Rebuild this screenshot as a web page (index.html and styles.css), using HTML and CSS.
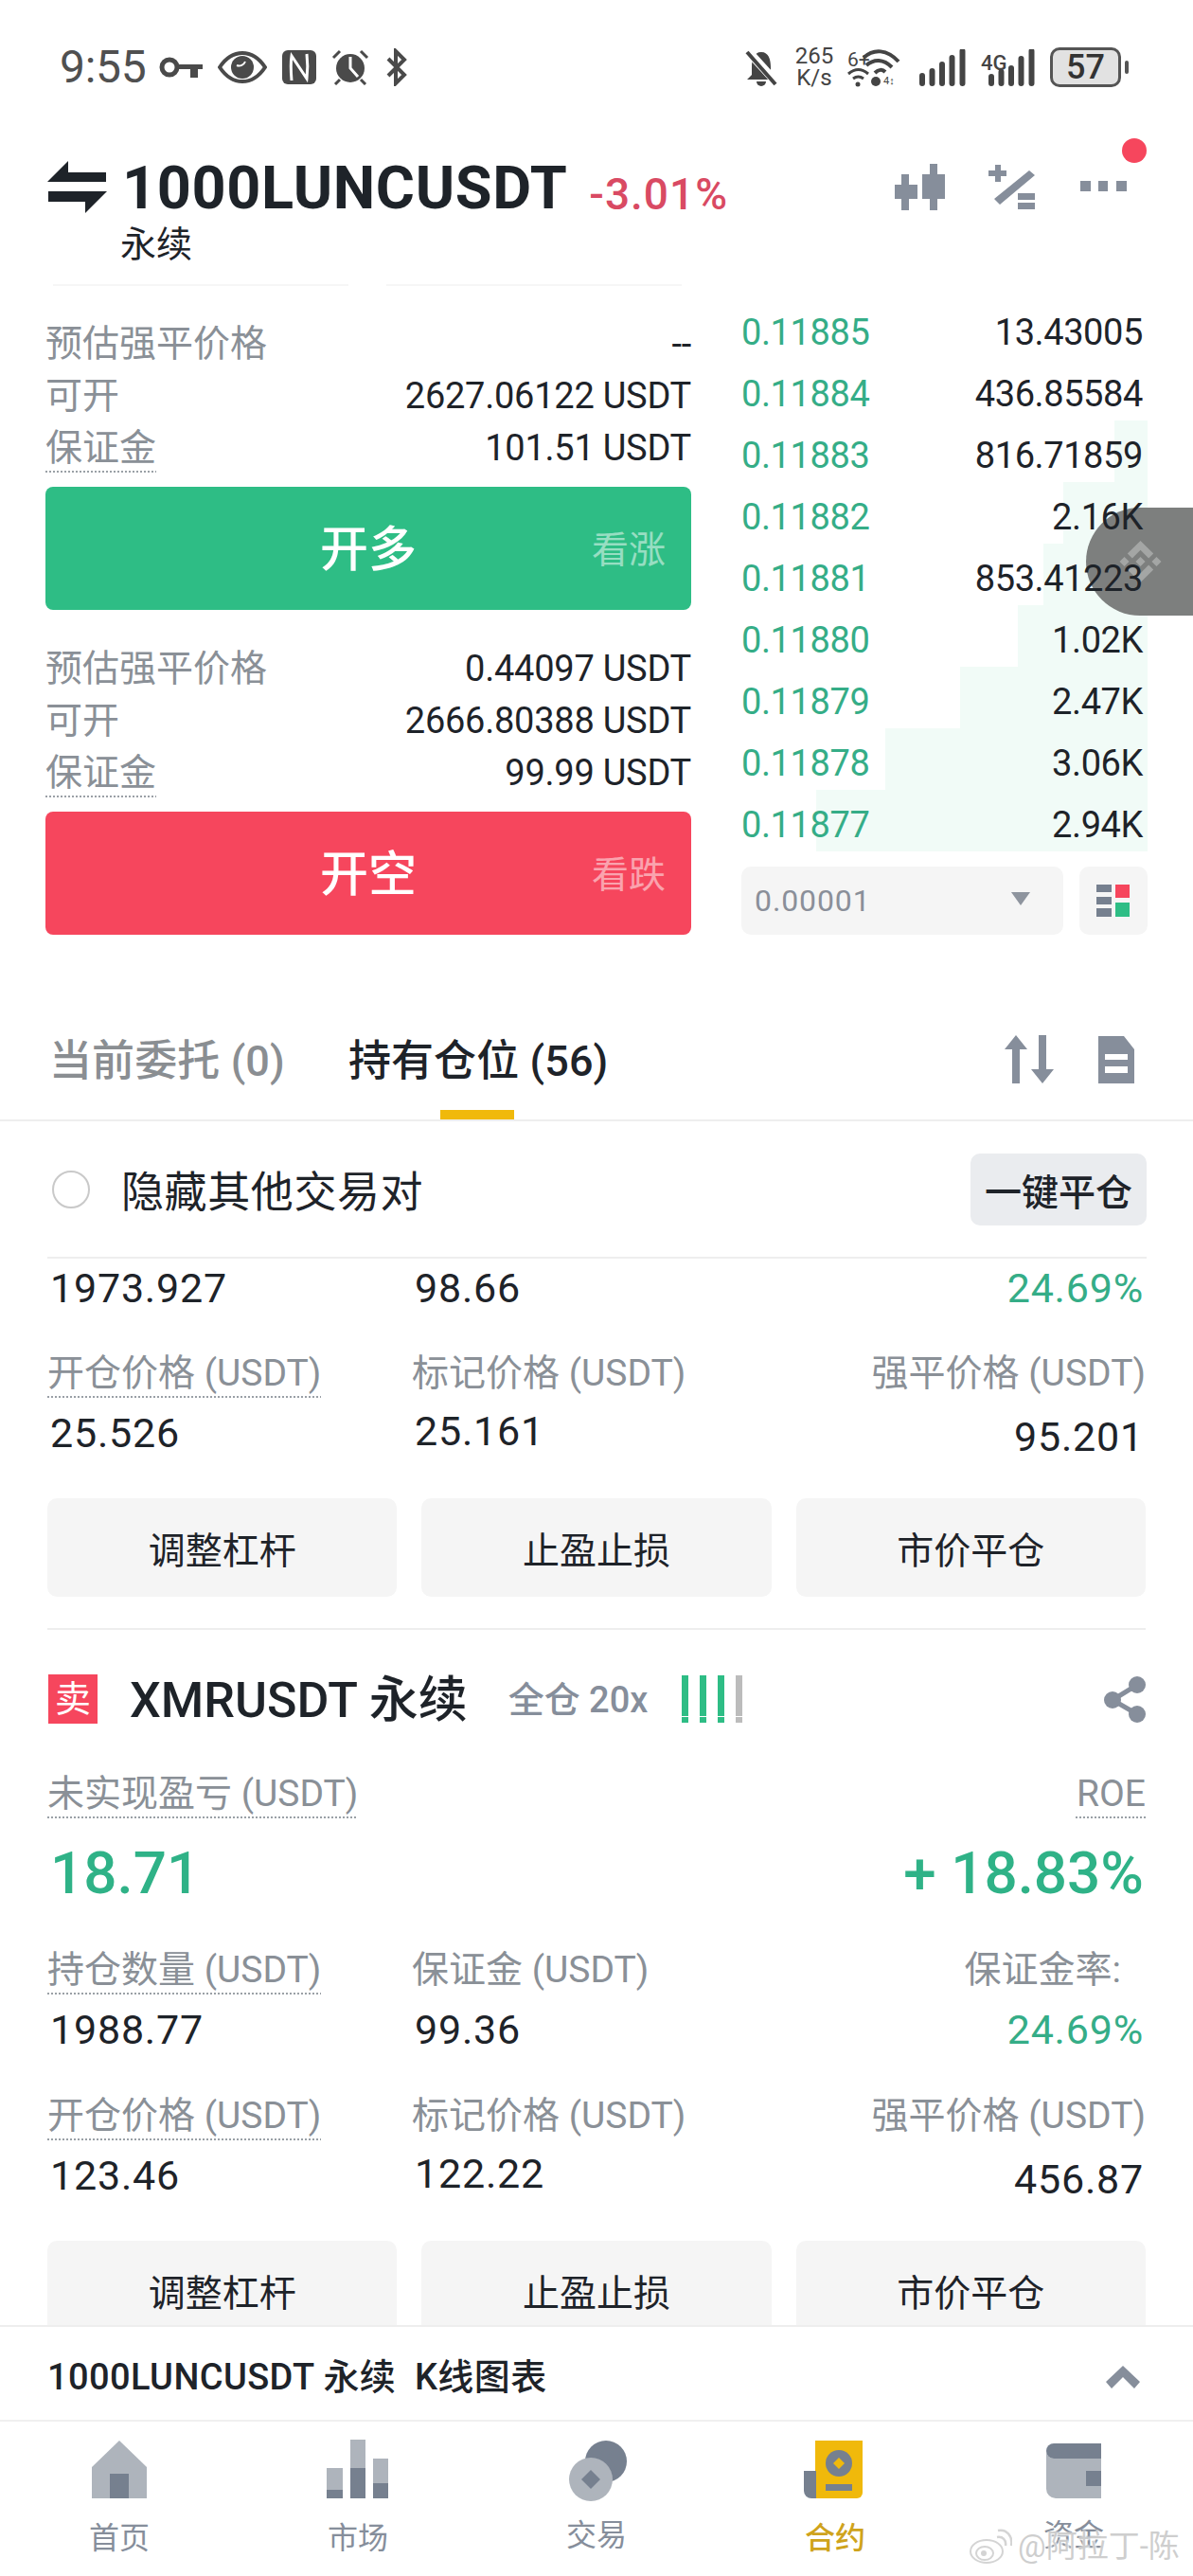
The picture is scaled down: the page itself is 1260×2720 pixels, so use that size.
FILE: index.html
```html
<!DOCTYPE html>
<html lang="zh-CN">
<head>
<meta charset="utf-8">
<title>1000LUNCUSDT 永续</title>
<link rel="stylesheet" href="styles.css">
</head>
<body>
<div class="page">
  <div class="status">
    <div class="status-left">
      <span class="time">9:55</span>
      <svg class="ic-key" viewBox="0 0 46 24"><circle cx="11" cy="12" r="8" fill="none" stroke="#4a4a4a" stroke-width="5"/><path d="M19 9H46V14H41V23H33V14H19Z" fill="#4a4a4a"/></svg>
      <svg class="ic-eye" viewBox="0 0 52 34"><path d="M2 17C10 5 19 2 26 2S42 5 50 17C42 29 33 32 26 32S10 29 2 17Z" fill="none" stroke="#4a4a4a" stroke-width="4"/><circle cx="26" cy="17" r="12" fill="#4a4a4a"/><path d="M20 15A7 7 0 0 0 29 11" fill="none" stroke="#fff" stroke-width="2"/></svg>
      <svg class="ic-nfc" viewBox="0 0 36 36"><rect width="36" height="36" rx="6" fill="#4a4a4a"/><path d="M10 32C9 20 9 12 10 6L26 30C27 22 27 12 26 4" fill="none" stroke="#fff" stroke-width="3"/></svg>
      <svg class="ic-alarm" viewBox="0 0 40 38"><circle cx="20" cy="20" r="15" fill="#4a4a4a"/><path d="M20 8V20L28 29" fill="none" stroke="#fff" stroke-width="3"/><path d="M2 9L9 2M38 9L31 2M9 32L4 37M31 32L36 37" stroke="#4a4a4a" stroke-width="3" fill="none"/></svg>
      <svg class="ic-bt" viewBox="0 0 24 40"><path d="M3 29L20 12L11 3V37L20 28L3 11" fill="none" stroke="#4a4a4a" stroke-width="4"/></svg>
    </div>
    <div class="status-right">
      <svg class="ic-bell" viewBox="0 0 34 39"><path d="M17 3C9 3 7 11 7 19V27L2 32H32L27 27V19C27 11 25 3 17 3Z" fill="#444"/><path d="M12 34A5 5 0 0 0 22 34Z" fill="#444"/><path d="M3 2L33 35" stroke="#fff" stroke-width="9"/><path d="M2 3L32 37" stroke="#444" stroke-width="4"/></svg>
      <span class="speed"><span>265</span><span>K/s</span></span>
      <svg class="ic-wifi" viewBox="0 0 56 42"><text x="0" y="20" class="wifi-six">6+</text><path d="M17 11C28 1 42 2 54 15M20 19C28 12 38 12 47 21M29 27C33 23 37 23 40 26" fill="none" stroke="#444" stroke-width="4"/><circle cx="30" cy="36" r="5" fill="#444"/><path d="M1 28C8 22 15 22 22 28M6 33C10 30 13 30 17 33" fill="none" stroke="#444" stroke-width="3"/><circle cx="11" cy="39" r="2.500" fill="#444"/><text x="38" y="39" class="wifi-four">4↕</text></svg>
      <svg class="ic-sig" viewBox="0 0 49 39"><path d="M3 36V28M13.500 36V23M24 36V16M34.500 36V9M45.500 36V2" stroke="#444" stroke-width="6" stroke-linecap="round" fill="none"/></svg>
      <svg class="ic-sig4" viewBox="0 0 58 39"><text x="0" y="22" class="sig-four">4G</text><path d="M11 36V29M21.500 36V24M32 36V20M42.500 36V10M53.500 36V2" stroke="#444" stroke-width="6" stroke-linecap="round" fill="none"/></svg>
      <span class="battery"><span class="battery-body">57</span><i class="battery-tip"></i></span>
    </div>
  </div>

  <header class="head">
    <div class="head-top">
      <svg class="ic-swap" viewBox="0 0 63 56"><path d="M0 23L22 1V13H62V23ZM1 33H63L40 56V44H1Z" fill="#1e2329"/></svg>
      <h1 class="symbol">1000LUNCUSDT</h1>
      <span class="pct">-3.01%</span>
      <div class="head-tools">
        <svg class="ic-candle" viewBox="0 0 53 49"><path d="M7 11H15V22H24V37H15V49H7V37H0V22H7ZM37 0H45V11H53V37H45V49H37V37H29V11H37Z" fill="#868e9b"/></svg>
        <svg class="ic-calc" viewBox="0 0 49 49"><path d="M7 1H13V7H19V13H13V19H7V13H0V7H7ZM43 7L49 12L12 43L6 37Z M31 31H49V38H31ZM31 41H49V48H31Z" fill="#868e9b"/></svg>
        <svg class="ic-more" viewBox="0 0 49 12"><path d="M0 0H11V11H0ZM19 0H29V11H19ZM38 0H49V11H38Z" fill="#868e9b"/></svg>
        <i class="red-dot"></i>
      </div>
    </div>
    <div class="perp">永续</div>
  </header>

  <div class="rule-pair"><i></i><i></i></div>

  <section class="trade">
    <div class="order">
      <div class="order-block">
        <div class="kv"><span class="k">预估强平价格</span><span class="v">--</span></div>
        <div class="kv"><span class="k">可开</span><span class="v">2627.06122 USDT</span></div>
        <div class="kv"><span class="k dot">保证金</span><span class="v">101.51 USDT</span></div>
        <button class="act act-long"><span class="act-main">开多</span><span class="act-sub">看涨</span></button>
      </div>
      <div class="order-block second">
        <div class="kv"><span class="k">预估强平价格</span><span class="v">0.44097 USDT</span></div>
        <div class="kv"><span class="k">可开</span><span class="v">2666.80388 USDT</span></div>
        <div class="kv"><span class="k dot">保证金</span><span class="v">99.99 USDT</span></div>
        <button class="act act-short"><span class="act-main">开空</span><span class="act-sub">看跌</span></button>
      </div>
    </div>
    <div class="book">
      <div class="float">
        <svg viewBox="0 0 126 126"><path d="M38.200 53L63 28.200L87.800 53L102.200 38.600L63 0L23.800 38.600ZM38.200 73L63 97.800L87.800 73L102.200 87.400L63 126L23.800 87.400ZM0 63L14.400 48.600L28.800 63L14.400 77.400ZM97.200 63L111.600 48.600L126 63L111.600 77.400ZM63 48.400L77.600 63L63 77.600L48.400 63Z" fill="#a4a6a5"/></svg>
      </div>
      <div class="br"><span class="p">0.11885</span><span class="q">13.43005</span></div>
      <div class="br"><span class="p">0.11884</span><span class="q">436.85584</span></div>
      <div class="br"><i class="depth" style="width:35px"></i><span class="p">0.11883</span><span class="q">816.71859</span></div>
      <div class="br"><i class="depth" style="width:89px"></i><span class="p">0.11882</span><span class="q">2.16K</span></div>
      <div class="br"><i class="depth" style="width:110px"></i><span class="p">0.11881</span><span class="q">853.41223</span></div>
      <div class="br"><i class="depth" style="width:137px"></i><span class="p">0.11880</span><span class="q">1.02K</span></div>
      <div class="br"><i class="depth" style="width:198px"></i><span class="p">0.11879</span><span class="q">2.47K</span></div>
      <div class="br"><i class="depth" style="width:277px"></i><span class="p">0.11878</span><span class="q">3.06K</span></div>
      <div class="br"><i class="depth" style="width:350px"></i><span class="p">0.11877</span><span class="q">2.94K</span></div>
      <div class="book-foot">
        <div class="tick"><span>0.00001</span><i class="tick-caret"></i></div>
        <div class="layout-btn">
          <svg viewBox="0 0 36 35"><path d="M0 0H16V8H0ZM0 13H16V21H0ZM0 25H16V34H0Z" fill="#76808f"/><rect x="20" width="15" height="14" fill="#f6465d"/><rect x="20" y="19" width="15" height="15" fill="#2ebd85"/></svg>
        </div>
      </div>
    </div>
  </section>

  <nav class="tabs">
    <span class="tab">当前委托 (0)</span>
    <span class="tab on">持有仓位 (56)<i class="tab-bar"></i></span>
    <div class="tab-tools">
      <svg class="ic-sort" viewBox="0 0 52 51"><path d="M12 0L24 15H16V51H8V15H0ZM36 0H44V36H52L40 51L28 36H36Z" fill="#868e9b"/></svg>
      <svg class="ic-doc" viewBox="0 0 38 50"><path fill-rule="evenodd" d="M0 0H27L38 14V50H0ZM7 19V25H31V19ZM7 32V39H31V32Z" fill="#868e9b"/></svg>
    </div>
  </nav>

  <div class="filter">
    <span class="filter-left"><i class="radio"></i><span>隐藏其他交易对</span></span>
    <button class="close-all">一键平仓</button>
  </div>

  <main class="positions">
    <section class="card">
      <div class="grid3 top-cut">
        <div class="cell"><span class="val">1973.927</span></div>
        <div class="cell"><span class="val">98.66</span></div>
        <div class="cell end"><span class="val green">24.69%</span></div>
      </div>
      <div class="grid3 row-gap">
        <div class="cell"><span class="lab dot">开仓价格 (USDT)</span><span class="val">25.526</span></div>
        <div class="cell"><span class="lab">标记价格 (USDT)</span><span class="val up2">25.161</span></div>
        <div class="cell end"><span class="lab">强平价格 (USDT)</span><span class="val down4">95.201</span></div>
      </div>
      <div class="btns">
        <button class="btn">调整杠杆</button><button class="btn">止盈止损</button><button class="btn">市价平仓</button>
      </div>
    </section>
    <section class="card last">
      <div class="pos-head">
        <span class="side">卖</span>
        <span class="pos-name">XMRUSDT 永续</span>
        <span class="pos-mode">全仓 20x</span>
        <span class="risk"><i class="g"></i><i class="g"></i><i class="g"></i><i class="n"></i></span>
        <svg class="ic-share" viewBox="0 0 44 49"><path d="M35 9L9 25L35 40" fill="none" stroke="#868e9b" stroke-width="5"/><circle cx="35" cy="9" r="9" fill="#868e9b"/><circle cx="9" cy="25" r="9" fill="#868e9b"/><circle cx="35" cy="40" r="9" fill="#868e9b"/></svg>
      </div>
      <div class="pnl-labels"><span class="lab dot">未实现盈亏 (USDT)</span><span class="lab dot">ROE</span></div>
      <div class="pnl-vals"><span>18.71</span><span>+ 18.83%</span></div>
      <div class="grid3 row-gap first">
        <div class="cell"><span class="lab dot">持仓数量 (USDT)</span><span class="val">1988.77</span></div>
        <div class="cell"><span class="lab">保证金 (USDT)</span><span class="val">99.36</span></div>
        <div class="cell end"><span class="lab inset">保证金率:</span><span class="val green">24.69%</span></div>
      </div>
      <div class="grid3 row-gap tight">
        <div class="cell"><span class="lab dot">开仓价格 (USDT)</span><span class="val">123.46</span></div>
        <div class="cell"><span class="lab">标记价格 (USDT)</span><span class="val up2">122.22</span></div>
        <div class="cell end"><span class="lab">强平价格 (USDT)</span><span class="val down4">456.87</span></div>
      </div>
      <div class="btns">
        <button class="btn">调整杠杆</button><button class="btn">止盈止损</button><button class="btn">市价平仓</button>
      </div>
    </section>
  </main>

  <div class="kline">
    <span>1000LUNCUSDT 永续&nbsp; K线图表</span>
    <svg class="ic-up" viewBox="0 0 36 24"><path d="M18 0L36 17L30 24L18 12L6 24L0 17Z" fill="#868e9b"/></svg>
  </div>

  <footer class="nav">
    <div class="nav-item">
      <svg viewBox="0 0 80 70"><path d="M40 3L69 31V64H11V31Z" fill="#aeb4bc"/><rect x="30" y="38" width="20" height="26" fill="#76808f"/></svg>
      <span>首页</span>
    </div>
    <div class="nav-item">
      <svg viewBox="0 0 80 70"><path d="M7 32H24V64H7ZM32 2H48V64H32ZM56 22H72V64H56Z" fill="#aeb4bc"/><path d="M7 55H24V64H7ZM32 32H48V64H32ZM56 48H72V64H56Z" fill="#76808f"/></svg>
      <span>市场</span>
    </div>
    <div class="nav-item raise">
      <svg viewBox="0 0 80 70"><circle cx="50" cy="25" r="22" fill="#76808f"/><circle cx="34" cy="44" r="23" fill="#aeb4bc"/><path d="M34 34L44 44L34 54L24 44Z" fill="#76808f"/></svg>
      <span>交易</span>
    </div>
    <div class="nav-item active">
      <svg viewBox="0 0 80 70"><path d="M19 3H69V58A6 6 0 0 1 63 64H19Z" fill="#f0b90b"/><path d="M7 35H20V64H15A8 8 0 0 1 7 56Z" fill="#76808f"/><circle cx="44" cy="27" r="14" fill="#76808f"/><path d="M44 21L50 27L44 33L38 27Z" fill="#f0b90b"/><rect x="30" y="49" width="28" height="7" fill="#76808f"/></svg>
      <span>合约</span>
    </div>
    <div class="nav-item raise2">
      <svg viewBox="0 0 80 70"><path d="M11 14V54A10 10 0 0 0 21 64H69V22H19A8 8 0 0 1 11 14Z" fill="#aeb4bc"/><path d="M19 6H69V22H19A8 8 0 0 1 19 6Z" fill="#76808f"/><rect x="53" y="35" width="16" height="16" fill="#76808f"/></svg>
      <span>资金</span>
    </div>
    <div class="watermark">
      <svg viewBox="0 0 46 38"><ellipse cx="19" cy="24" rx="17" ry="12" fill="#fff" stroke="#d4d4d4" stroke-width="2"/><ellipse cx="17" cy="26" rx="9" ry="7" fill="none" stroke="#d4d4d4" stroke-width="2"/><circle cx="16" cy="26" r="3" fill="#d4d4d4"/><path d="M30 9C36 8 40 12 39 18M31 2C40 0 47 8 45 18" fill="none" stroke="#d4d4d4" stroke-width="2.500"/></svg>
      <span>@阿拉丁-陈</span>
    </div>
  </footer>
</div>
</body>
</html>
```

FILE: styles.css
```css
* { box-sizing: border-box; }
html, body { margin: 0; padding: 0; background: #fff; }
body { font-family: Roboto, "Noto Sans CJK SC", sans-serif; color: #1e2329; }
i { display: block; font-style: normal; }
button { font: inherit; color: inherit; border: 0; padding: 0; }
svg { display: block; flex: none; }

.page { width: 1260px; height: 2720px; display: flex; flex-direction: column; overflow: hidden; background: #fff; }

/* status bar */
.status { height: 110px; padding: 50px 68px 0 63px; display: flex; justify-content: space-between; align-items: flex-start; color: #4a4a4a; }
.status-left, .status-right { display: flex; align-items: center; height: 42px; }
.time { font-size: 48px; line-height: 42px; letter-spacing: -0.3px; width: 105px; color: #505050; }
.ic-key { width: 46px; height: 24px; margin-right: 16px; }
.ic-eye { width: 52px; height: 34px; margin-right: 16px; }
.ic-nfc { width: 36px; height: 36px; margin-right: 16px; }
.ic-alarm { width: 40px; height: 38px; margin-right: 17px; }
.ic-bt { width: 24px; height: 40px; }
.ic-bell { width: 34px; height: 39px; margin-right: 17px; }
.speed { display: flex; flex-direction: column; align-items: center; width: 44px; margin-right: 13px; font-size: 24px; line-height: 23px; color: #444; }
.ic-wifi { width: 56px; height: 42px; margin-right: 20px; }
.wifi-six { font: 21px Roboto, sans-serif; fill: #444; }
.wifi-four { font: 11px Roboto, sans-serif; fill: #444; }
.sig-four { font: 500 22px Roboto, sans-serif; fill: #444; }
.ic-sig { width: 49px; height: 39px; margin-right: 16px; }
.ic-sig4 { width: 58px; height: 39px; margin-right: 15px; }
.battery { display: flex; align-items: center; }
.battery-body { width: 75px; height: 42px; border: 3px solid #555; border-radius: 10px; background: #e2e2e2; font-size: 36px; font-weight: 500; line-height: 36px; text-align: center; color: #333; }
.battery-tip { width: 4px; height: 14px; margin-left: 4px; border-radius: 2px; background: #555; }

/* header */
.head { height: 190px; padding: 56px 70px 0 50px; }
.head-top { display: flex; align-items: center; height: 62px; }
.ic-swap { width: 63px; height: 56px; }
.symbol { margin: 3px 0 0 16px; font-size: 63px; font-weight: 700; line-height: 62px; letter-spacing: 0.6px; }
.pct { margin: 15px 0 0 23px; font-size: 46px; font-weight: 500; line-height: 50px; letter-spacing: 1px; color: #d94a63; }
.head-tools { position: relative; margin-left: auto; display: flex; align-items: center; height: 62px; }
.ic-candle { width: 53px; height: 49px; margin-right: 46px; }
.ic-calc { width: 49px; height: 49px; margin-right: 48px; }
.ic-more { width: 49px; height: 12px; }
.red-dot { position: absolute; top: -20px; right: -21px; width: 26px; height: 26px; border-radius: 50%; background: #f6465d; }
.perp { margin: 8px 0 0 77px; font-size: 38px; line-height: 44px; }

.rule-pair { display: flex; gap: 40px; height: 2px; padding-left: 56px; }
.rule-pair i { width: 312px; background: #f6f6f6; }

/* trade */
.trade { height: 768px; padding-left: 48px; display: flex; }
.order { width: 682px; padding-top: 34px; }
.kv { display: flex; justify-content: space-between; height: 55px; line-height: 55px; }
.k { font-size: 39px; color: #8a9097; }
.v { font-size: 38px; letter-spacing: -0.25px; }
.dot { text-decoration: underline dotted #9aa0a6 2px; text-underline-offset: 11px; text-decoration-skip-ink: none; }
.act { display: grid; grid-template-columns: 1fr auto 1fr; align-items: center; width: 100%; height: 130px; margin-top: 13px; border-radius: 8px; color: #fff; }
.act-main { grid-column: 2; padding-top: 4px; font-size: 51px; font-weight: 500; line-height: 60px; }
.act-sub { grid-column: 3; justify-self: end; padding: 3px 27px 0 0; font-size: 39px; line-height: 46px; opacity: 0.5; }
.act-long { background: #2ebd85; }
.act-short { background: #f6465d; }
.second { margin-top: 35px; }

.book { position: relative; width: 429px; margin-left: 53px; padding-top: 17px; }
.br { position: relative; display: flex; justify-content: space-between; height: 65px; line-height: 65px; padding-right: 5px; font-size: 38px; letter-spacing: -0.4px; }
.p, .q { position: relative; z-index: 2; }
.p { color: #35ad87; }
.depth { position: absolute; z-index: 0; top: -5px; right: 0; height: 65px; background: #f1fbf7; }
.float { position: absolute; z-index: 1; top: 234px; right: -48px; width: 113px; height: 114px; border-radius: 57px 0 0 57px; background: #7d7f7e; display: flex; align-items: center; padding-left: 35px; }
.float svg { width: 45px; height: 44px; }
.book-foot { display: flex; gap: 17px; margin-top: 11px; }
.tick { position: relative; flex: 1; display: flex; justify-content: space-between; align-items: center; height: 72px; padding: 0 35px 0 14px; border-radius: 10px; background: #f5f5f5; font-size: 32px; color: #8a8f99; letter-spacing: 0.9px; }
.tick-caret { width: 0; height: 0; margin-top: -4px; border: 10px solid transparent; border-top: 14px solid #8e949e; border-bottom: 0; }
.layout-btn { width: 72px; height: 72px; border-radius: 10px; background: #f5f5f5; display: flex; align-items: center; justify-content: center; }
.layout-btn svg { width: 36px; height: 35px; }

/* tabs */
.tabs { display: flex; align-items: flex-start; height: 114px; padding: 0 62px 0 52px; border-bottom: 2px solid #eeeeee; }
.tab { position: relative; height: 112px; font-size: 45px; font-weight: 500; line-height: 101px; color: #8a8e92; margin-right: 67px; letter-spacing: 0.1px; }
.tab.on { color: #1e2329; }
.tab-bar { position: absolute; left: 97px; bottom: 0; width: 78px; height: 10px; background: #f0b90b; }
.tab-tools { margin-left: auto; display: flex; align-items: center; gap: 47px; padding-top: 23px; }
.ic-sort { width: 52px; height: 51px; }
.ic-doc { width: 38px; height: 50px; }

.filter { display: flex; justify-content: space-between; align-items: center; height: 145px; margin: 0 49px 0 50px; border-bottom: 2px solid #eeeeee; }
.filter-left { display: flex; align-items: center; font-size: 45px; letter-spacing: 0.6px; padding-left: 5px; }
.radio { width: 40px; height: 40px; margin-right: 33px; border-radius: 50%; border: 2px solid #c9c9c9; }
.close-all { width: 186px; height: 76px; border-radius: 10px; background: #eaecef; font-size: 39px; font-weight: 500; }

/* positions */
.positions { flex: 1; min-height: 0; overflow: hidden; }
.card { margin: 0 50px; padding-bottom: 33px; border-bottom: 2px solid #eeeeee; }
.card.last { border-bottom: 0; padding-top: 47px; }
.top-cut { padding-top: 9px; }
.grid3 { display: grid; grid-template-columns: 385px 1fr auto; }
.row-gap { margin-top: 46px; }
.row-gap.first { margin-top: 45px; }
.row-gap.tight { margin-top: 47px; }
.cell { display: flex; flex-direction: column; align-items: flex-start; }
.cell.end { align-items: flex-end; }
.lab { font-size: 39px; line-height: 44px; color: #8a9097; }
.lab.inset { padding-right: 26px; }
.val { font-size: 43px; line-height: 44px; letter-spacing: 0.8px; padding-left: 3px; }
.lab + .val { margin-top: 19px; }
.lab + .val.up2 { margin-top: 17px; }
.lab + .val.down4 { margin: 23px 0 -4px; padding-right: 4px; }
.cell.end .val { padding-right: 2px; }
.green { color: #35ad87; }
.btns { display: grid; grid-template-columns: repeat(3, 1fr); gap: 26px; margin-top: 47px; }
.btn { height: 104px; border-radius: 10px; background: #f5f5f5; font-size: 39px; }

.pos-head { display: flex; align-items: center; height: 52px; }
.side { width: 52px; height: 52px; margin-left: 1px; background: #f6465d; color: #fff; font-size: 38px; line-height: 52px; text-align: center; }
.pos-name { margin: 3px 0 0 34px; font-size: 52px; font-weight: 500; line-height: 52px; }
.pos-mode { margin: 2px 0 0 43px; font-size: 38px; font-weight: 500; line-height: 44px; color: #868e9b; }
.risk { display: flex; gap: 12px; margin-left: 36px; }
.risk i { width: 7px; height: 50px; }
.risk .g { background: linear-gradient(#2ebd85 0 43px, transparent 43px 44px, #2ebd85 44px); }
.risk .n { background: linear-gradient(#bcbcbc 0 43px, transparent 43px 44px, #bcbcbc 44px); }
.ic-share { width: 44px; height: 49px; margin-left: auto; }
.pnl-labels { display: flex; justify-content: space-between; margin-top: 52px; }
.pnl-vals { display: flex; justify-content: space-between; margin-top: 27px; padding: 0 2px 0 3px; font-size: 62px; font-weight: 500; line-height: 70px; color: #2fb287; }

/* bottom */
.kline { display: flex; justify-content: space-between; align-items: center; height: 102px; padding: 0 56px 0 50px; border-top: 2px solid #eeeeee; border-bottom: 2px solid #f0f0f0; font-size: 38px; font-weight: 500; letter-spacing: 0.4px; background: #fff; }
.ic-up { width: 36px; height: 24px; margin-top: 8px; }
.nav { position: relative; height: 163px; display: grid; grid-template-columns: repeat(5, 1fr); padding-top: 17px; }
.nav-item { display: flex; flex-direction: column; align-items: center; font-size: 32px; line-height: 40px; color: #868e9b; }
.nav-item svg { width: 80px; height: 70px; }
.nav-item span { margin-top: 16px; }
.nav-item.raise span { margin-top: 13px; }
.nav-item.raise2 span { margin-top: 13px; }
.nav-item.active span { color: #cfa31c; font-weight: 500; }
.watermark { position: absolute; left: 1023px; top: 110px; display: flex; align-items: center; gap: 6px; font-size: 33px; line-height: 44px; white-space: nowrap; color: rgba(190, 190, 190, 0.75); text-shadow: 0 0 2px #fff, 1px 1px 2px #fff; }
.watermark svg { width: 46px; height: 38px; }
```
